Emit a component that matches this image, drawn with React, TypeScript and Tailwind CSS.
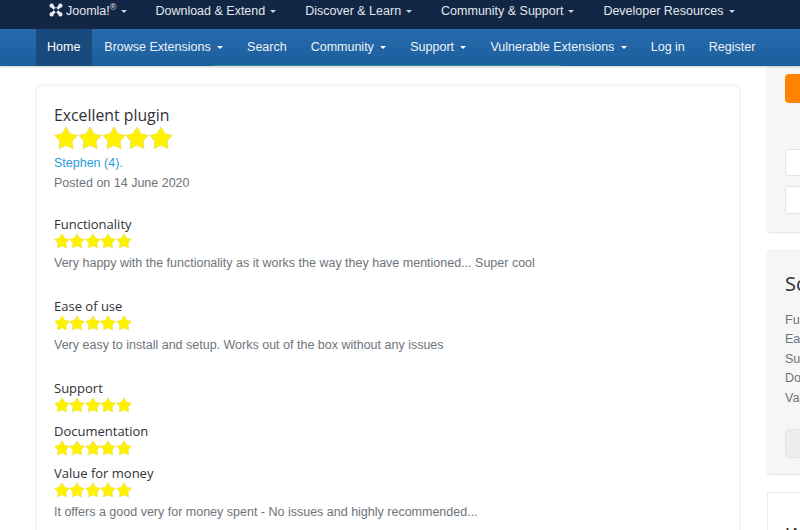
const topItems = ["Download & Extend", "Discover & Learn", "Community & Support", "Developer Resources"];

const subItems: { label: string; caret?: boolean; active?: boolean }[] = [
  { label: "Home", active: true },
  { label: "Browse Extensions", caret: true },
  { label: "Search" },
  { label: "Community", caret: true },
  { label: "Support", caret: true },
  { label: "Vulnerable Extensions", caret: true },
  { label: "Log in" },
  { label: "Register" },
];

function TopCaret() {
  return <span className="ml-[5px] inline-block h-0 w-0 border-x-[3px] border-t-[3px] border-x-transparent border-t-[#c9d3e0]" />;
}

function SubCaret() {
  return <span className="ml-[6.4px] inline-block h-0 w-0 border-x-[3px] border-t-[3px] border-x-transparent border-t-white" />;
}

function Star({ size }: { size: number }) {
  return (
    <svg width={size} height={size} viewBox="0 0 24 24" className="block shrink-0">
      <polygon
        points="12,0.8 15.9,7.55 23.4,9.2 18.3,15 19.1,22.7 12,19.6 4.9,22.7 5.7,15 0.6,9.2 8.1,7.55"
        fill="#fff200"
        stroke="#d9d28a"
        strokeWidth="0.5"
      />
    </svg>
  );
}

function Stars({ big }: { big?: boolean }) {
  return (
    <div className={big ? "flex h-[25px]" : "flex h-[16px]"}>
      {[0, 1, 2, 3, 4].map((i) => (
        <div key={i} className={big ? "w-[23.8px]" : "w-[15.4px]"}>
          <Star size={big ? 24 : 16} />
        </div>
      ))}
    </div>
  );
}

function Rating({ title, text, className }: { title: string; text?: string; className?: string }) {
  return (
    <div className={className}>
      <h4 className="h-[17px] font-['Open_Sans',sans-serif] text-[13px] leading-[17px] text-[#2f3136]">{title}</h4>
      <Stars />
      {text && <p className="mt-[5.5px] h-[17px] text-[12.5px] leading-[17px] text-[#6d747b]">{text}</p>}
    </div>
  );
}

function JoomlaLogo() {
  return (
    <svg width="14" height="14" viewBox="0 0 24 24" className="-mt-[2px] shrink-0" fill="none" stroke="#e8ebf0" strokeWidth="5">
      <path d="M6 6 L18 18" />
      <path d="M18 6 L6 18" />
      <rect x="1" y="1" width="7" height="7" rx="3" fill="#e8ebf0" stroke="none" />
      <rect x="16" y="1" width="7" height="7" rx="3" fill="#e8ebf0" stroke="none" />
      <rect x="1" y="16" width="7" height="7" rx="3" fill="#e8ebf0" stroke="none" />
      <rect x="16" y="16" width="7" height="7" rx="3" fill="#e8ebf0" stroke="none" />
      <rect x="9" y="9" width="6" height="6" fill="#122645" stroke="none" transform="rotate(45 12 12)" />
    </svg>
  );
}

export default function App() {
  return (
    <div className="flex h-[530px] w-[800px] flex-col overflow-hidden bg-white font-['Liberation_Sans',Arial,sans-serif]">
      <nav className="flex h-[29px] shrink-0 bg-[#122645] pl-[36px] text-[12.5px] text-[#e3e7ee]">
        <div className="flex items-center gap-[3px] border-r border-[#182a49] pb-[7px] pl-[13px] pr-[13px]">
          <JoomlaLogo />
          <span>
            Joomla!<sup className="text-[9px]">®</sup>
          </span>
          <span className="ml-[2px] inline-block h-0 w-0 border-x-[3px] border-t-[3px] border-x-transparent border-t-[#c9d3e0]" />
        </div>
        {topItems.map((t) => (
          <div key={t} className="flex items-center border-r border-[#182a49] pb-[7px] pl-[14px] pr-[14px]">
            {t}
            <TopCaret />
          </div>
        ))}
      </nav>
      <nav className="relative flex h-[37px] shrink-0 bg-gradient-to-b from-[#276bac] to-[#1c5f9f] pl-[36px] text-[12.5px] text-[#eef2f7] shadow-[0_1px_2px_rgba(0,0,0,0.2)]">
        {subItems.map((s) => (
          <div
            key={s.label}
            className={`flex items-center px-[12px] ${s.active ? "bg-[#1a4a7c] pl-[11px] text-white" : ""}`}
          >
            {s.label}
            {s.caret && <SubCaret />}
          </div>
        ))}
        <span className="absolute bottom-0 left-[213px] h-[1px] w-[348px] bg-[#2d8a8c]" />
      </nav>
      <div className="flex min-h-0 flex-1 gap-[27px] pl-[36px]">
        <main className="mt-[19px] h-[600px] w-[704px] shrink-0 rounded-[4px] border border-[#f0f1f4] bg-white px-[17px] pt-[19px] shadow-[0_0_3px_rgba(0,0,0,0.08)]">
          <h3 className="h-[20px] font-['Open_Sans',sans-serif] text-[15.8px] leading-[20px] text-[#2f3136]">Excellent plugin</h3>
          <div className="mt-[1px]">
            <Stars big />
          </div>
          <a className="mt-[3px] block h-[19px] text-[12.5px] leading-[19px] text-[#2a9de0]">Stephen (4).</a>
          <p className="mt-[1px] h-[19px] text-[12.5px] leading-[19px] text-[#6d747b]">Posted on 14 June 2020</p>
          <Rating
            className="mt-[23px]"
            title="Functionality"
            text="Very happy with the functionality as it works the way they have mentioned... Super cool"
          />
          <Rating
            className="mt-[26.5px]"
            title="Ease of use"
            text="Very easy to install and setup. Works out of the box without any issues"
          />
          <Rating className="mt-[26.5px]" title="Support" />
          <Rating className="mt-[9.5px]" title="Documentation" />
          <Rating
            className="mt-[9.5px]"
            title="Value for money"
            text="It offers a good very for money spent - No issues and highly recommended..."
          />
        </main>
        <aside className="flex w-[200px] shrink-0 flex-col">
          <section className="h-[166px] shrink-0 rounded-b-[4px] bg-[#f6f6f6] px-[18px] pt-[8px] shadow-[0_1px_2px_rgba(0,0,0,0.12)]">
            <div className="h-[29px] rounded-[4px] bg-[#ff8200]" />
            <div className="mt-[46px] h-[27px] rounded-[3px] border border-[#e4e4e4] bg-white" />
            <div className="mt-[10px] h-[28px] rounded-[3px] border border-[#e4e4e4] bg-white" />
          </section>
          <section className="mt-[17px] h-[225px] shrink-0 rounded-[4px] bg-[#f6f6f6] px-[18px] pt-[21px] shadow-[0_1px_2px_rgba(0,0,0,0.12)]">
            <h3 className="h-[28px] font-['Open_Sans',sans-serif] text-[20px] leading-[28px] text-[#2f3136]">Scores</h3>
            <ul className="mt-[13px] text-[12.5px] leading-[19.4px] text-[#6d747b]">
              <li>Functionality</li>
              <li>Ease of use</li>
              <li>Support</li>
              <li>Documentation</li>
              <li>Value for money</li>
            </ul>
            <div className="mt-[21px] h-[29px] rounded-[4px] border border-[#e4e4e4] bg-[#eeeeee]" />
          </section>
          <section className="mt-[18px] h-[100px] shrink-0 border border-[#ebebeb] bg-white px-[18px] pt-[28px]">
            <h3 className="font-['Open_Sans',sans-serif] text-[20px] leading-[28px] text-[#2f3136]">Write</h3>
          </section>
        </aside>
      </div>
    </div>
  );
}
